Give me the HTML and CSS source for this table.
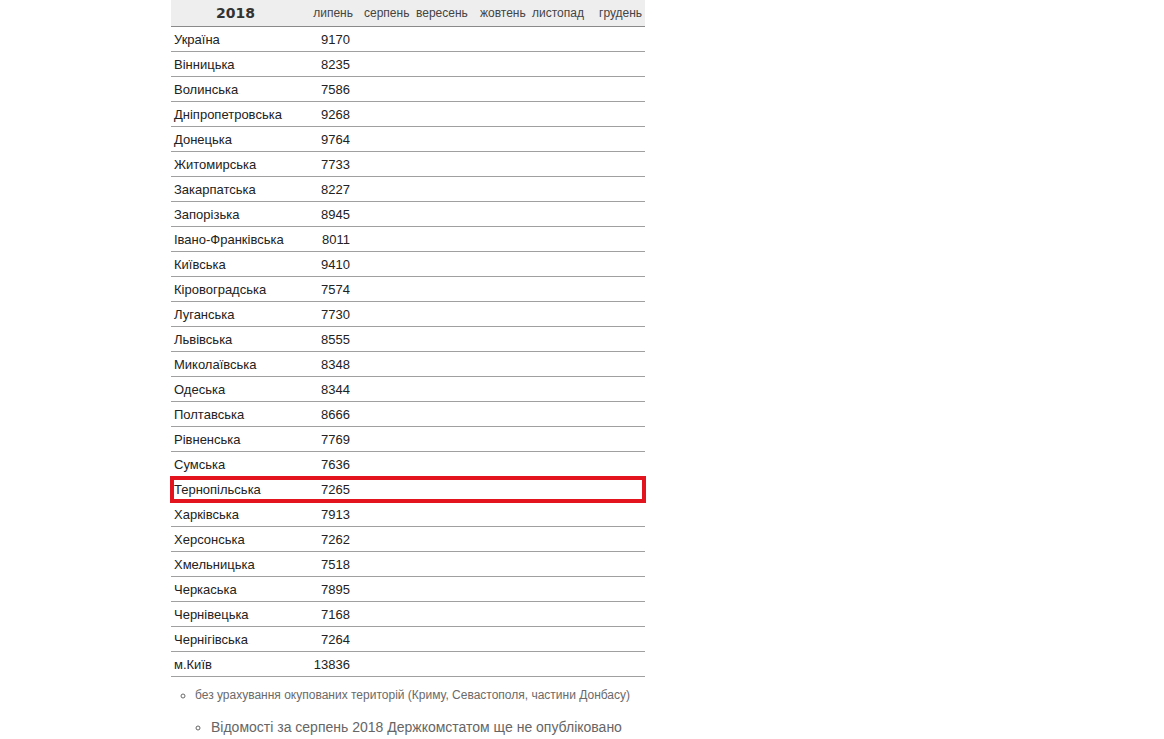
FILE: index.html
```html
<!DOCTYPE html>
<html lang="uk">
<head>
<meta charset="utf-8">
<link rel="stylesheet" href="styles.css">
</head>
<body>
<div class="wrap">
  <table class="data">
    <colgroup>
      <col class="w1"><col class="w2"><col class="w3"><col class="w4"><col class="w5"><col class="w6"><col class="w7">
    </colgroup>
    <thead>
      <tr>
        <th class="year">2018</th>
        <th class="m2">липень</th>
        <th class="m3">серпень</th>
        <th class="m4">вересень</th>
        <th class="m5">жовтень</th>
        <th class="m6">листопад</th>
        <th class="m7">грудень</th>
      </tr>
    </thead>
    <tbody>
      <tr><td>Україна</td><td class="num">9170</td><td></td><td></td><td></td><td></td><td></td></tr>
      <tr><td>Вінницька</td><td class="num">8235</td><td></td><td></td><td></td><td></td><td></td></tr>
      <tr><td>Волинська</td><td class="num">7586</td><td></td><td></td><td></td><td></td><td></td></tr>
      <tr><td>Дніпропетровська</td><td class="num">9268</td><td></td><td></td><td></td><td></td><td></td></tr>
      <tr><td>Донецька</td><td class="num">9764</td><td></td><td></td><td></td><td></td><td></td></tr>
      <tr><td>Житомирська</td><td class="num">7733</td><td></td><td></td><td></td><td></td><td></td></tr>
      <tr><td>Закарпатська</td><td class="num">8227</td><td></td><td></td><td></td><td></td><td></td></tr>
      <tr><td>Запорізька</td><td class="num">8945</td><td></td><td></td><td></td><td></td><td></td></tr>
      <tr><td>Івано-Франківська</td><td class="num">8011</td><td></td><td></td><td></td><td></td><td></td></tr>
      <tr><td>Київська</td><td class="num">9410</td><td></td><td></td><td></td><td></td><td></td></tr>
      <tr><td>Кіровоградська</td><td class="num">7574</td><td></td><td></td><td></td><td></td><td></td></tr>
      <tr><td>Луганська</td><td class="num">7730</td><td></td><td></td><td></td><td></td><td></td></tr>
      <tr><td>Львівська</td><td class="num">8555</td><td></td><td></td><td></td><td></td><td></td></tr>
      <tr><td>Миколаївська</td><td class="num">8348</td><td></td><td></td><td></td><td></td><td></td></tr>
      <tr><td>Одеська</td><td class="num">8344</td><td></td><td></td><td></td><td></td><td></td></tr>
      <tr><td>Полтавська</td><td class="num">8666</td><td></td><td></td><td></td><td></td><td></td></tr>
      <tr><td>Рівненська</td><td class="num">7769</td><td></td><td></td><td></td><td></td><td></td></tr>
      <tr><td>Сумська</td><td class="num">7636</td><td></td><td></td><td></td><td></td><td></td></tr>
      <tr class="hl"><td>Тернопільська</td><td class="num">7265</td><td></td><td></td><td></td><td></td><td></td></tr>
      <tr><td>Харківська</td><td class="num">7913</td><td></td><td></td><td></td><td></td><td></td></tr>
      <tr><td>Херсонська</td><td class="num">7262</td><td></td><td></td><td></td><td></td><td></td></tr>
      <tr><td>Хмельницька</td><td class="num">7518</td><td></td><td></td><td></td><td></td><td></td></tr>
      <tr><td>Черкаська</td><td class="num">7895</td><td></td><td></td><td></td><td></td><td></td></tr>
      <tr><td>Чернівецька</td><td class="num">7168</td><td></td><td></td><td></td><td></td><td></td></tr>
      <tr><td>Чернігівська</td><td class="num">7264</td><td></td><td></td><td></td><td></td><td></td></tr>
      <tr><td>м.Київ</td><td class="num">13836</td><td></td><td></td><td></td><td></td><td></td></tr>
    </tbody>
  </table>
  <ul class="note">
    <li>без урахування окупованих територій (Криму, Севастополя, частини Донбасу)</li>
  </ul>
  <ul class="note2">
    <li>Відомості за серпень 2018 Держкомстатом ще не опубліковано</li>
  </ul>
</div>
</body>
</html>
```
FILE: styles.css
```css
html, body {
  margin: 0;
  padding: 0;
  background: #fff;
}
body {
  font-family: "Liberation Sans", Arial, sans-serif;
  color: #222;
}
.wrap {
  margin-left: 171px;
}
.data {
  border-collapse: collapse;
  table-layout: fixed;
  width: 474px;
  font-size: 13px;
}
.w1 { width: 129px; }
.w2 { width: 56px; }
.w3 { width: 57px; }
.w4 { width: 63px; }
.w5 { width: 54px; }
.w6 { width: 60px; }
.w7 { width: 55px; }
.data th {
  background: #eeeeee;
  height: 26px;
  padding: 0;
  font-weight: normal;
  font-size: 12px;
  color: #444;
  text-align: left;
  border-bottom: 1px solid #8a8a8a;
  white-space: nowrap;
}
.data th.year {
  text-align: center;
  font-family: "DejaVu Sans", Verdana, sans-serif;
  font-weight: bold;
  font-size: 14px;
  color: #333;
  padding-left: 0;
}
.data th.m2 { text-align: right; padding-right: 3px; }
.data th.m3 { padding-left: 8px; }
.data th.m4 { padding-left: 3px; }
.data th.m5 { padding-left: 4px; }
.data th.m6 { padding-left: 2px; }
.data th.m7 { padding-left: 9px; }
.data td {
  height: 24px;
  padding: 0 0 0 3px;
  border-bottom: 1px solid #a0a0a0;
  white-space: nowrap;
  color: #222;
}
.data td.num {
  text-align: right;
  padding: 0 6px 0 0;
}
.data tr.hl {
  outline: 4px solid #e3141e;
  outline-offset: -3px;
}
.note {
  margin: 11px 0 0 0;
  padding-left: 24px;
  list-style: circle;
  font-size: 12px;
  color: #6a6a6a;
}
.note2 {
  margin: 17px 0 0 0;
  padding-left: 40px;
  list-style: circle;
  font-size: 14px;
  color: #666;
  white-space: nowrap;
}
```
